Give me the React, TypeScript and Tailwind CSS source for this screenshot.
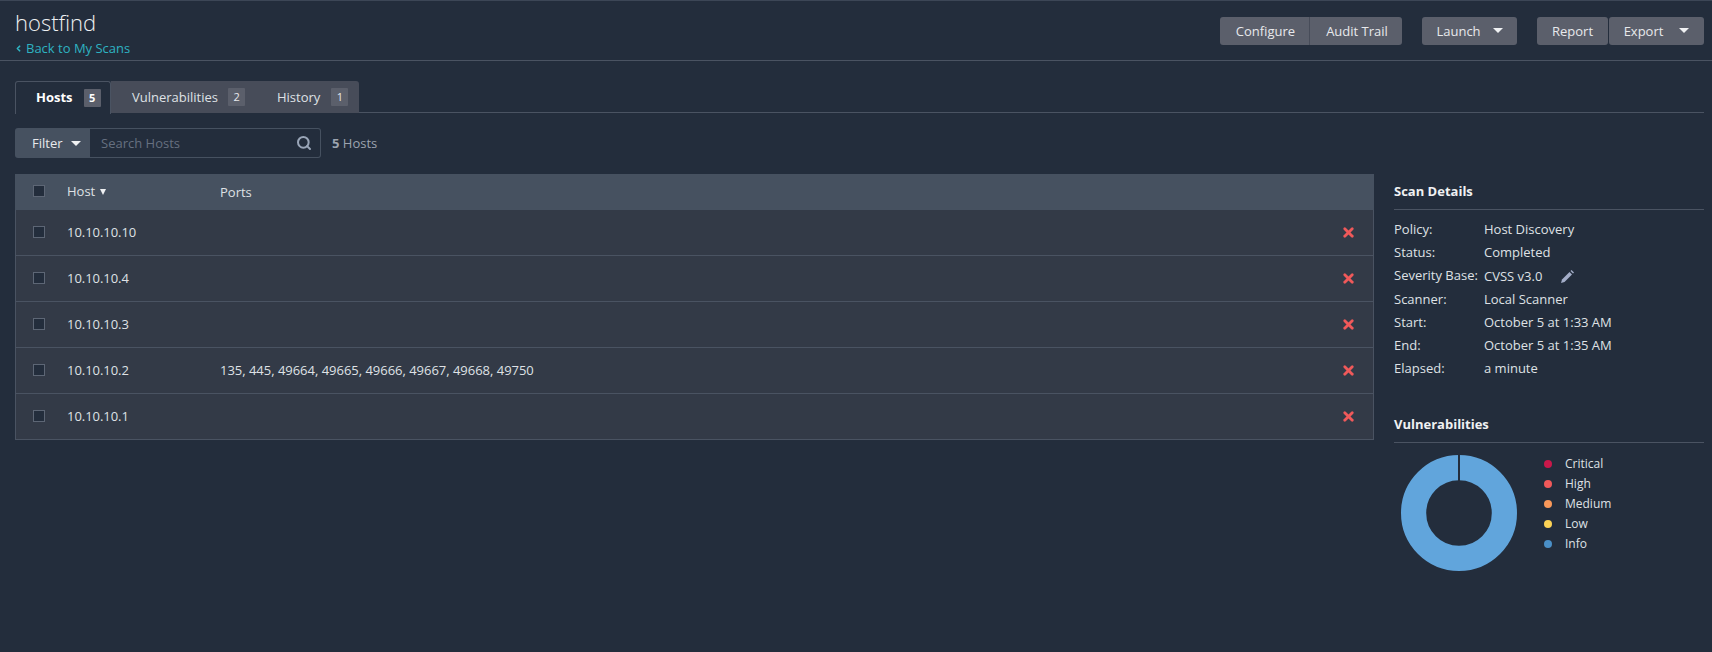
import { ChevronLeft, Search, X } from 'lucide-react';

const hosts = [
  { ip: '10.10.10.10', ports: '' },
  { ip: '10.10.10.4', ports: '' },
  { ip: '10.10.10.3', ports: '' },
  { ip: '10.10.10.2', ports: '135, 445, 49664, 49665, 49666, 49667, 49668, 49750' },
  { ip: '10.10.10.1', ports: '' },
];

const details = [
  ['Policy:', 'Host Discovery'],
  ['Status:', 'Completed'],
  ['Severity Base:', 'CVSS v3.0'],
  ['Scanner:', 'Local Scanner'],
  ['Start:', 'October 5 at 1:33 AM'],
  ['End:', 'October 5 at 1:35 AM'],
  ['Elapsed:', 'a minute'],
];

const legend = [
  { label: 'Critical', color: 'bg-[#c9184a]' },
  { label: 'High', color: 'bg-[#f0595a]' },
  { label: 'Medium', color: 'bg-[#f8985a]' },
  { label: 'Low', color: 'bg-[#fbd256]' },
  { label: 'Info', color: 'bg-[#4a8fc7]' },
];

function Caret() {
  return <span className="inline-block w-0 h-0 border-x-[5px] border-x-transparent border-t-[5px] border-t-[#f0f1f3]" />;
}

function Check() {
  return <span className="block w-[12px] h-[12px] border border-[#5d6675] bg-[#232d3c]" />;
}

function Btn({ label, caretGap, className }: { label: string; caretGap?: string; className: string }) {
  return (
    <button className={`h-[28px] bg-[#5b5f6b] text-[#e8e9ec] text-[13px] flex items-center justify-center ${className}`}>
      <span className="pt-[2px]">{label}</span>
      {caretGap && <span className={`flex items-center mb-[1px] ${caretGap}`}><Caret /></span>}
    </button>
  );
}

function Tab({ label, count, active, gap, className }: { label: string; count: number; active?: boolean; gap: string; className: string }) {
  return (
    <div
      className={`flex items-center text-[13px] ${className} ${
        active ? 'bg-[#232d3c] text-white font-bold border-t border-l border-r border-[#4a5362] h-[33px] rounded-t-[3px]' : 'h-[32px] bg-[#474c59] text-[#dfe1e5]'
      }`}
    >
      <span className={active ? '' : 'mt-[2px]'}>{label}</span>
      <span className={`${gap} w-[17px] h-[18px] flex items-center justify-center text-[11px] rounded-[1px] ${active ? 'bg-[#5b5f6b] text-white' : 'bg-[#5b5f6b] text-[#e8e9ec]'}`}>
        {count}
      </span>
    </div>
  );
}

export default function App() {
  return (
    <div className="w-[1712px] h-[652px] overflow-hidden bg-[#232d3c] text-[13px] text-[#dfe1e5] font-['Open_Sans',sans-serif] border-t border-[#3c4656]">
      <header className="h-[60px] border-b border-[#4a5362] pl-[15px] pr-[8px] flex justify-between">
        <div>
          <h1 className="text-[22px] font-light leading-[30px] mt-[6px] text-[#eef0f2]">hostfind</h1>
          <a className="flex items-center text-[13px] leading-[18px] mt-[2px] text-[#2eb3c2]">
            <ChevronLeft size={9} strokeWidth={4.5} className="mr-[3px] -ml-px" />Back to My Scans
          </a>
        </div>
        <div className="flex mt-[16px]">
          <Btn label="Configure" className="w-[90px] pl-[2px] rounded-l-[3px] border-r border-[#474c59]" />
          <Btn label="Audit Trail" className="w-[92px] pl-[2px] rounded-r-[3px]" />
          <Btn label="Launch" caretGap="ml-[12px]" className="w-[95px] rounded-[3px] ml-[20px]" />
          <Btn label="Report" className="w-[71px] rounded-[3px] ml-[20px]" />
          <Btn label="Export" caretGap="ml-[16px]" className="w-[95px] rounded-[3px] ml-px" />
        </div>
      </header>

      <main className="pl-[15px] pr-[8px] pt-[20px]">
        <div className="flex border-b border-[#4a5362] h-[32px]">
          <Tab label="Hosts" count={5} active gap="ml-[11px]" className="pl-[20px] w-[96px]" />
          <Tab label="Vulnerabilities" count={2} gap="ml-[10px]" className="pl-[21px] w-[146px]" />
          <Tab label="History" count={1} gap="ml-[11px]" className="pl-[20px] w-[102px] rounded-tr-[3px]" />
        </div>

        <div className="flex items-center mt-[15px] h-[30px]">
          <div className="w-[75px] h-full bg-[#465160] rounded-l-[3px] flex items-center pl-[17px] text-[#e8e9ec]">
            <span className="mt-[2px]">Filter</span>
            <span className="ml-[8px] flex"><Caret /></span>
          </div>
          <div className="w-[231px] h-full border border-l-0 border-[#465160] rounded-r-[3px] flex items-center justify-between pl-[11px] pr-[8px]">
            <span className="text-[#667080] mt-[2px]">Search Hosts</span>
            <Search size={16} strokeWidth={3} className="text-[#9aa6b8]" />
          </div>
          <span className="ml-[11px] mt-[1px] text-[#9ca3af]"><b className="font-bold">5</b> Hosts</span>
        </div>

        <div className="flex mt-[16px] gap-[20px]">
          <div className="w-[1359px]">
            <div className="h-[36px] bg-[#465160] flex items-center pl-[18px] text-[#dfe1e5]">
              <span className="mb-[2px]"><Check /></span>
              <span className="ml-[22px] w-[153px] mb-px flex items-center">
                Host
                <span className="ml-[5px] w-0 h-0 border-x-[3.5px] border-x-transparent border-t-[6px] border-t-[#eef0f2]" />
              </span>
              <span className="mt-px">Ports</span>
            </div>
            <div className="border-x border-[#4a5362]">
              {hosts.map((h) => (
                <div key={h.ip} className="h-[46px] bg-[#333a47] flex items-center pl-[17px] border-b border-[#4a5362]">
                  <span className="mb-px"><Check /></span>
                  <span className="ml-[22px] w-[153px] tracking-[-0.05px]">{h.ip}</span>
                  <span className="flex-1 tracking-[-0.02px]">{h.ports}</span>
                  <X size={15} strokeWidth={4.5} className="text-[#f0595a] mr-[17px] mb-px" />
                </div>
              ))}
            </div>
          </div>

          <aside className="w-[310px] mt-[8px]">
            <h3 className="font-bold text-[13px] text-[#f0f1f3] leading-[18px] pb-[9px] border-b border-[#4a5362]">Scan Details</h3>
            <div className="mt-[8px]">
              {details.map(([k, v]) => {
                const severity = k === 'Severity Base:';
                return (
                  <div key={k} className={`flex items-center ${severity ? 'h-[24px]' : 'h-[23px]'}`}>
                    <span className="w-[90px] shrink-0">{k}</span>
                    <span className={severity ? 'mt-[2px]' : ''}>{v}</span>
                    {severity && (
                      <svg width="13" height="13" viewBox="0 0 13 13" className="ml-[19px] text-[#a3adc8]" fill="currentColor">
                        <path d="M0 13 L1 9.5 L8.5 2 L11 4.5 L3.5 12 Z" />
                        <path d="M9.5 1 L10.5 0 L13 2.5 L12 3.5 Z" />
                      </svg>
                    )}
                  </div>
                );
              })}
            </div>
            <h3 className="font-bold text-[13px] text-[#f0f1f3] leading-[18px] pb-[9px] border-b border-[#4a5362] mt-[35px]">Vulnerabilities</h3>
            <div className="flex mt-[12px]">
              <svg width="116" height="116" viewBox="0 0 116 116" className="ml-[7px] shrink-0">
                <circle cx="58" cy="58" r="45.4" fill="none" stroke="#61a5dc" strokeWidth="25.2" />
                <rect x="57" y="0" width="2" height="26" fill="#232d3c" />
              </svg>
              <ul className="ml-[27px] mt-[-1px]">
                {legend.map((l) => (
                  <li key={l.label} className="flex items-center h-[20px]">
                    <span className={`w-[8px] h-[8px] rounded-full ${l.color}`} />
                    <span className="ml-[13px] text-[12px]">{l.label}</span>
                  </li>
                ))}
              </ul>
            </div>
          </aside>
        </div>
      </main>
    </div>
  );
}
